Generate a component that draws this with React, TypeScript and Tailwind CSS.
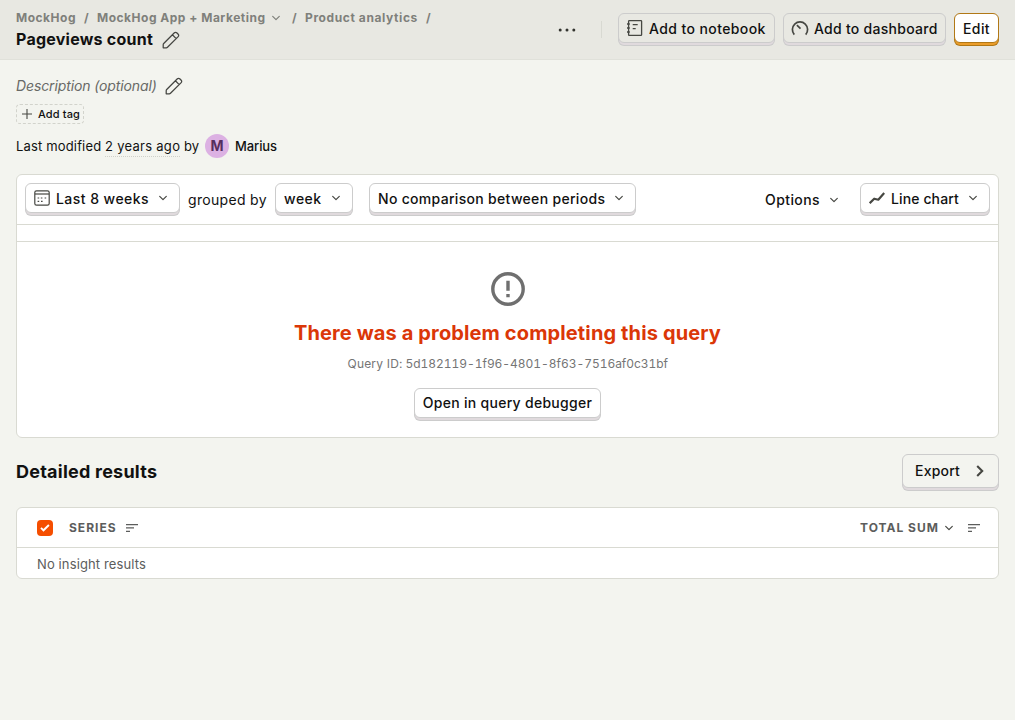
import React from "react";

function Chevron({ className = "", tone = "text-[#464742]" }: { className?: string; tone?: string }) {
  return (
    <svg viewBox="0 0 10 10" className={`h-[10px] w-[10px] shrink-0 ${tone} ${className}`} fill="none" stroke="currentColor" strokeWidth="1.2" strokeLinecap="round" strokeLinejoin="round">
      <path d="M1.7 3.3 5 6.6 8.3 3.3" />
    </svg>
  );
}

function Pencil() {
  return (
    <svg viewBox="0 0 20 20" className="h-5 w-5 shrink-0 text-[#444541]" fill="none" stroke="currentColor" strokeWidth="1.25" strokeLinejoin="round">
      <path d="M2.2 17.8v-3.1c0-.5.2-.9.5-1.2L13.4 2.8a1.6 1.6 0 0 1 2.3 0l1.5 1.5a1.6 1.6 0 0 1 0 2.3L6.5 17.3c-.3.3-.7.5-1.2.5ZM11.4 4.8l3.8 3.8" />
    </svg>
  );
}

function SortLines() {
  return (
    <svg viewBox="0 0 12 8" className="h-2 w-3 shrink-0" fill="#5c5d5c">
      <path d="M0 0h12v1.3H0zM0 3.3h8v1.3H0zM0 6.7h4V8H0z" />
    </svg>
  );
}

function Button({ className = "", children }: { className?: string; children: React.ReactNode }) {
  return (
    <button className={`flex h-[30px] shrink-0 items-center whitespace-nowrap rounded-[6px] border border-[#cccccc] text-sm font-medium text-[#111] shadow-[0_3px_0_-1px_#e0dadd,0_3px_0_0_#cccccc] ${className}`}>
      {children}
    </button>
  );
}

function Header() {
  return (
    <header className="flex h-[60px] justify-between border-b border-[#e0e1da] bg-[#e8e8e2] pl-4 pr-4">
      <div className="pt-[10px]">
        <div className="flex h-4 items-center whitespace-nowrap text-[12px] font-bold leading-4 tracking-[0.5px] text-[#7f807b]">
          <span className="w-[68px]">MockHog</span>
          <span className="w-[13px]">/</span>
          <span className="w-[174px]">MockHog App + Marketing</span>
          <Chevron className="h-2 w-2" tone="text-[#7f807b]" />
          <span className="ml-[11px] w-[13px]">/</span>
          <span className="w-[121px] tracking-[0.6px]">Product analytics</span>
          <span>/</span>
        </div>
        <div className="mt-[2px] flex h-6 items-center">
          <h1 className="mb-[2px] w-[145px] whitespace-nowrap text-base font-bold leading-6 tracking-[0.24px]">Pageviews count</h1>
          <Pencil />
        </div>
      </div>
      <div className="flex pt-[13px]">
        <svg viewBox="0 0 18 4" className="mr-[25px] mt-[15px] h-1 w-[18px]" fill="#33342f">
          <circle cx="2.2" cy="2" r="1.5" />
          <circle cx="9" cy="2" r="1.5" />
          <circle cx="15.8" cy="2" r="1.5" />
        </svg>
        <div className="mr-4 mt-2 h-[17px] w-px bg-[#d8d9d2]" />
        <Button className="mr-2 w-[157px] bg-[#e8e8e2] pl-[7px]">
          <svg viewBox="0 0 18 18" className="mr-[5px] h-[18px] w-[18px]" fill="none" stroke="#464742" strokeWidth="1.3">
            <rect x="2.6" y="1.6" width="13" height="14.8" rx="0.7" />
            <path d="M1 5h2.8M1 9h2.8M1 13h2.8M6.7 5.7h5M6.7 9.7h3" />
          </svg>
          <span className="pt-px tracking-[0.4px]">Add to notebook</span>
        </Button>
        <Button className="mr-2 w-[163px] bg-[#e8e8e2] pl-[7px]">
          <svg viewBox="0 0 18 18" className="mr-[5px] h-[18px] w-[18px]" fill="none" stroke="#464742" strokeWidth="1.7">
            <path d="M3.3 15.6A7.6 7.6 0 1 1 14.7 15.6M5.9 6.1l3.6 3.5" />
          </svg>
          <span className="pt-px tracking-[0.27px]">Add to dashboard</span>
        </Button>
        <button className="flex h-[30px] w-[45px] items-center justify-center rounded-[6px] border border-[#b17816] bg-white pt-px text-sm font-medium tracking-[0.4px] shadow-[0_3px_0_-1px_#eb9d2a,0_3px_0_0_#b17816]">Edit</button>
      </div>
    </header>
  );
}

function Details() {
  return (
    <section className="flex h-[98px] flex-col pt-[16px]">
      <div className="flex h-5 items-center">
        <span className="w-[148px] whitespace-nowrap text-sm italic tracking-[-0.12px] text-[#686966]">Description (optional)</span>
        <Pencil />
      </div>
      <button className="mt-[8px] flex h-5 w-[68px] items-center whitespace-nowrap rounded border border-dashed border-[#d2d3cc] pl-[5px] text-[11px] font-medium tracking-[0.12px]">
        <svg viewBox="0 0 10 10" className="mr-[6px] h-[10px] w-[10px]" stroke="#464742" strokeWidth="1.1">
          <path d="M5 0v10M0 5h10" />
        </svg>
        Add tag
      </button>
      <div className="mt-[10px] flex h-6 items-center whitespace-nowrap text-[13px]">
        <span className="w-[89px] pt-px tracking-[0.16px]">Last modified</span>
        <span className="mt-px h-5 w-[75px] border-b border-dotted border-[#cfd0c9] leading-[19px] tracking-[0.28px]">2 years ago</span>
        <span className="ml-[4px] w-[21px] pt-px">by</span>
        <span className="flex h-6 w-6 items-center justify-center rounded-full bg-[#dcb1e3] text-sm font-bold text-[#572e5e]">M</span>
        <span className="ml-[6px] pt-px font-medium tracking-[-0.1px]">Marius</span>
      </div>
    </section>
  );
}

function Insight() {
  return (
    <section className="mt-4 h-[264px] rounded-[6px] border border-[#d9dad2] bg-white">
      <div className="flex h-[50px] items-start border-b border-[#d9dad2] pl-2 pr-2 pt-2">
        <Button className="w-[155px] bg-white pl-[8px]">
          <svg viewBox="0 0 16 16" className="mr-[6px] h-4 w-4" fill="none" stroke="#464742" strokeWidth="1.2">
            <rect x="0.8" y="0.8" width="14.4" height="14.4" rx="1.7" />
            <path d="M1 4h14" />
            <path d="M6.8 8h1.6M10.6 8h1.6M3.6 11.4h1.6M7 11.4h1.6M3.6 8h1.6" />
          </svg>
          <span className="w-[93px] pt-px text-left tracking-[0.45px]">Last 8 weeks</span>
          <Chevron className="ml-[9px]" />
        </Button>
        <span className="ml-[8px] w-[87px] whitespace-nowrap text-sm leading-[33px] tracking-[0.32px]">grouped by</span>
        <Button className="w-[78px] bg-white pl-[8px]">
          <span className="w-[38px] pt-px text-left tracking-[0.5px]">week</span>
          <Chevron className="ml-[9px]" />
        </Button>
        <Button className="ml-4 w-[267px] bg-white pl-[8px]">
          <span className="w-[227px] pt-px text-left tracking-[0.31px]">No comparison between periods</span>
          <Chevron className="ml-[9px]" />
        </Button>
        <button className="ml-auto mr-[21px] flex h-[33px] items-center text-sm font-medium">
          <span className="w-[55px] text-left tracking-[0.42px]">Options</span>
          <Chevron className="ml-[9px]" />
        </button>
        <Button className="w-[130px] bg-white pl-[8px]">
          <svg viewBox="0 0 16 12" className="mr-[6px] h-3 w-4" fill="none" stroke="#464742" strokeWidth="2.2" strokeLinejoin="round">
            <path d="m.7 11.1 4.5-4.4 4.1 1L15.2 1" />
          </svg>
          <span className="w-[68px] pt-px text-left tracking-[0.12px]">Line chart</span>
          <Chevron className="ml-[9px]" />
        </Button>
      </div>
      <div className="h-[17px] border-b border-[#d9dad2]" />
      <div className="flex flex-col items-center pt-[30px]">
        <svg viewBox="0 0 34 34" className="h-[34px] w-[34px]" fill="none" stroke="#6f6f6f" strokeWidth="3.4">
          <circle cx="17" cy="17" r="15.2" />
          <path d="M17 8.7v10.1M17 22v3.3" />
        </svg>
        <h2 className="mt-[13px] whitespace-nowrap text-xl font-bold leading-7 tracking-[0.13px] text-[#db3707]">There was a problem completing this query</h2>
        <p className="mt-[9px] flex w-[320px] gap-[3px] whitespace-nowrap text-xs leading-4 text-[#757575]">
          <span className="w-[55px] tracking-[0.2px]">Query ID:</span>
          <span className="tabular-nums tracking-[-0.04px]">5d182119-1f96-4801-8f63-7516af0c31bf</span>
        </p>
        <Button className="mt-[16px] w-[187px] justify-center bg-white tracking-[0.28px]">Open in query debugger</Button>
      </div>
    </section>
  );
}

function Results() {
  return (
    <section className="pt-4">
      <div className="flex h-[37px] items-start justify-between">
        <h2 className="pt-[4px] text-lg font-bold leading-7 tracking-[0.23px]">Detailed results</h2>
        <button className="flex h-[34px] w-[97px] items-center rounded-[6px] border border-[#cccccc] bg-[#f3f4ef] pl-[12px] text-sm font-medium shadow-[0_3px_0_-1px_#e0dadd,0_3px_0_0_#cccccc]">
          <span className="w-[60px] text-left tracking-[0.2px]">Export</span>
          <svg viewBox="0 0 10 12" className="h-3 w-[10px]" fill="none" stroke="#464742" strokeWidth="2.1">
            <path d="m2.2 1 5 5-5 5" />
          </svg>
        </button>
      </div>
      <div className="mt-4 h-[72px] rounded-[6px] border border-[#d9dad2] bg-white">
        <div className="flex h-10 items-center border-b border-[#d9dad2] pl-5 pr-[18px] text-xs font-bold tracking-[1px] text-[#5c5d5c]">
          <span className="mr-4 flex h-4 w-4 items-center justify-center rounded-[4px] bg-[#f54e00]">
            <svg viewBox="0 0 10 8" className="h-2 w-[10px]" fill="none" stroke="#fff" strokeWidth="1.9">
              <path d="m1 3.8 2.5 2.5L8.9 1" />
            </svg>
          </span>
          <span className="w-[57px]">SERIES</span>
          <SortLines />
          <span className="ml-auto w-[84px]">TOTAL SUM</span>
          <Chevron className="mr-[14px] h-2 w-2" />
          <SortLines />
        </div>
        <div className="pl-5 text-[13px] leading-[32px] tracking-[0.12px] text-[#5c5d5c]">No insight results</div>
      </div>
    </section>
  );
}

export default function App() {
  return (
    <div className="h-[720px] w-[1015px] overflow-hidden bg-[#f3f4ef] font-['Inter',sans-serif] text-[#111]">
      <Header />
      <main className="px-4">
        <Details />
        <Insight />
        <Results />
      </main>
    </div>
  );
}
